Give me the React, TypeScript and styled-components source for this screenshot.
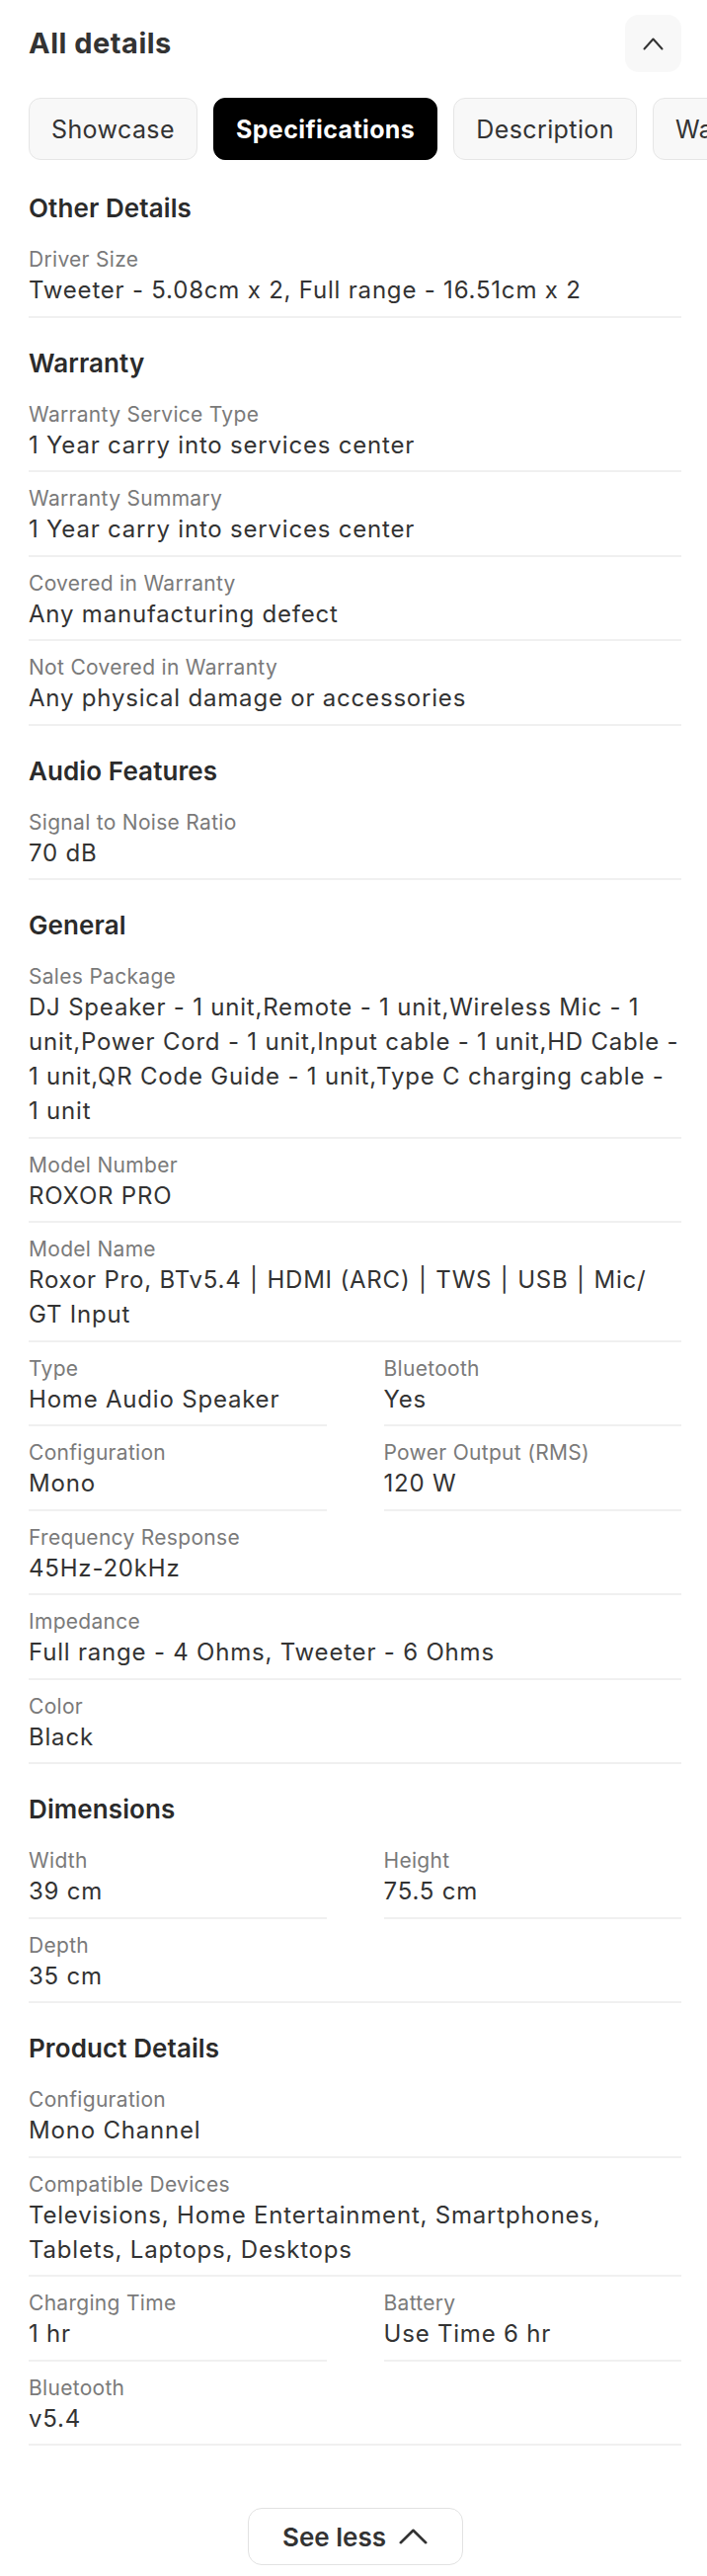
import React from "react";
import styled, { createGlobalStyle, css } from "styled-components";

const GlobalStyle = createGlobalStyle`
  html, body { margin: 0; padding: 0; background: #ffffff; }
  body { font-family: Inter, "Noto Sans", "Liberation Sans", sans-serif; color: #333333; }
  * { box-sizing: border-box; }
`;

const Page = styled.div`
  width: 716px;
  padding: 15px 26px 9px 29px;
  overflow: hidden;
`;

const Header = styled.div`
  display: flex;
  align-items: center;
  justify-content: space-between;
  height: 58px;
`;

const Title = styled.h2`
  margin: 0;
  font-size: 29px;
  line-height: 36px;
  font-weight: 700;
  color: #333333;
  letter-spacing: 0.5px;
`;

const CollapseButton = styled.button`
  width: 57px;
  height: 58px;
  border: none;
  border-radius: 14px;
  background: #f8f8f8;
  display: flex;
  align-items: center;
  justify-content: center;
  padding: 0;
  color: #333333;
`;

const Tabs = styled.div`
  margin-top: 26px;
  margin-right: -26px;
  display: flex;
  gap: 16px;
  overflow: hidden;
  white-space: nowrap;
`;

const Tab = styled.button<{ $active?: boolean }>`
  flex: none;
  height: 63px;
  padding: 0 22px;
  border-radius: 12px;
  border: 1.5px solid #e6e6e6;
  background: #f8f8f8;
  color: #333333;
  font-family: inherit;
  font-size: 25px;
  font-weight: 400;
  letter-spacing: 0.4px;
  ${(p) =>
    p.$active &&
    css`
      background: #000000;
      border-color: #000000;
      color: #ffffff;
      font-weight: 700;
    `}
`;

const Sections = styled.div`
  margin-top: 33px;
  display: flex;
  flex-direction: column;
  gap: 30px;
`;

const Section = styled.section`
  display: flex;
  flex-direction: column;
`;

const SectionTitle = styled.h3`
  margin: 0 0 9px;
  font-size: 26px;
  line-height: 32px;
  font-weight: 600;
  color: #2b2b2b;
  letter-spacing: 0.1px;
`;

const Grid = styled.div`
  display: grid;
  grid-template-columns: 1fr 1fr;
  column-gap: 58px;
`;

const Row = styled.div<{ $full?: boolean }>`
  grid-column: ${(p) => (p.$full ? "1 / -1" : "auto")};
  padding: 14px 0 8.5px;
  border-bottom: 2px solid #f0f0f0;
  display: flex;
  flex-direction: column;
`;

const Label = styled.div`
  font-size: 21px;
  line-height: 26px;
  color: #7a7a7a;
  letter-spacing: 0.3px;
`;

const Value = styled.div`
  font-size: 24px;
  line-height: 35px;
  color: #333333;
  letter-spacing: 0.8px;
`;

const Sep = styled.span`
  margin: 0 1px;
`;

const Footer = styled.div`
  display: flex;
  justify-content: center;
  margin-top: 63px;
`;

const SeeLess = styled.button`
  width: 218px;
  height: 58px;
  border: 1.5px solid #e2e2e2;
  border-radius: 14px;
  background: #ffffff;
  display: flex;
  align-items: center;
  justify-content: center;
  gap: 13px;
  font-family: inherit;
  font-size: 26px;
  font-weight: 600;
  color: #333333;
  padding: 0;
`;

type Item = { label: string; value: React.ReactNode; half?: boolean };
type Group = { title: string; items: Item[] };

const modelName = (
  <>
    Roxor Pro, BTv5.4 <Sep>|</Sep> HDMI (ARC) <Sep>|</Sep> TWS <Sep>|</Sep> USB <Sep>|</Sep> Mic/
    <br />
    GT Input
  </>
);

const groups: Group[] = [
  {
    title: "Other Details",
    items: [{ label: "Driver Size", value: "Tweeter - 5.08cm x 2, Full range - 16.51cm x 2" }],
  },
  {
    title: "Warranty",
    items: [
      { label: "Warranty Service Type", value: "1 Year carry into services center" },
      { label: "Warranty Summary", value: "1 Year carry into services center" },
      { label: "Covered in Warranty", value: "Any manufacturing defect" },
      { label: "Not Covered in Warranty", value: "Any physical damage or accessories" },
    ],
  },
  {
    title: "Audio Features",
    items: [{ label: "Signal to Noise Ratio", value: "70 dB" }],
  },
  {
    title: "General",
    items: [
      {
        label: "Sales Package",
        value:
          "DJ Speaker - 1 unit,Remote - 1 unit,Wireless Mic - 1 unit,Power Cord - 1 unit,Input cable - 1 unit,HD Cable - 1 unit,QR Code Guide - 1 unit,Type C charging cable - 1 unit",
      },
      { label: "Model Number", value: "ROXOR PRO" },
      { label: "Model Name", value: modelName },
      { label: "Type", value: "Home Audio Speaker", half: true },
      { label: "Bluetooth", value: "Yes", half: true },
      { label: "Configuration", value: "Mono", half: true },
      { label: "Power Output (RMS)", value: "120 W", half: true },
      { label: "Frequency Response", value: "45Hz-20kHz" },
      { label: "Impedance", value: "Full range - 4 Ohms, Tweeter - 6 Ohms" },
      { label: "Color", value: "Black" },
    ],
  },
  {
    title: "Dimensions",
    items: [
      { label: "Width", value: "39 cm", half: true },
      { label: "Height", value: "75.5 cm", half: true },
      { label: "Depth", value: "35 cm" },
    ],
  },
  {
    title: "Product Details",
    items: [
      { label: "Configuration", value: "Mono Channel" },
      { label: "Compatible Devices", value: "Televisions, Home Entertainment, Smartphones, Tablets, Laptops, Desktops" },
      { label: "Charging Time", value: "1 hr", half: true },
      { label: "Battery", value: "Use Time 6 hr", half: true },
      { label: "Bluetooth", value: "v5.4" },
    ],
  },
];

const tabs = ["Showcase", "Specifications", "Description", "Warranty"];

const ChevronUp = ({ w, h, sw }: { w: number; h: number; sw: number }) => (
  <svg width={w} height={h} viewBox={`0 0 ${w} ${h}`} fill="none">
    <polyline
      points={`${sw / 2 + 0.5},${h - sw / 2 - 0.5} ${w / 2},${sw / 2 + 0.5} ${w - sw / 2 - 0.5},${h - sw / 2 - 0.5}`}
      stroke="#333333"
      strokeWidth={sw}
      strokeLinecap="round"
      strokeLinejoin="round"
    />
  </svg>
);

export default function App() {
  return (
    <>
      <GlobalStyle />
      <Page>
        <Header>
          <Title>All details</Title>
          <CollapseButton aria-label="Collapse">
            <ChevronUp w={21} h={13} sw={2} />
          </CollapseButton>
        </Header>
        <Tabs>
          {tabs.map((t) => (
            <Tab key={t} $active={t === "Specifications"}>
              {t}
            </Tab>
          ))}
        </Tabs>
        <Sections>
          {groups.map((g) => (
            <Section key={g.title}>
              <SectionTitle>{g.title}</SectionTitle>
              <Grid>
                {g.items.map((it, i) => (
                  <Row key={i} $full={!it.half}>
                    <Label>{it.label}</Label>
                    <Value>{it.value}</Value>
                  </Row>
                ))}
              </Grid>
            </Section>
          ))}
        </Sections>
        <Footer>
          <SeeLess>
            See less
            <ChevronUp w={29} h={16} sw={2.6} />
          </SeeLess>
        </Footer>
      </Page>
    </>
  );
}
